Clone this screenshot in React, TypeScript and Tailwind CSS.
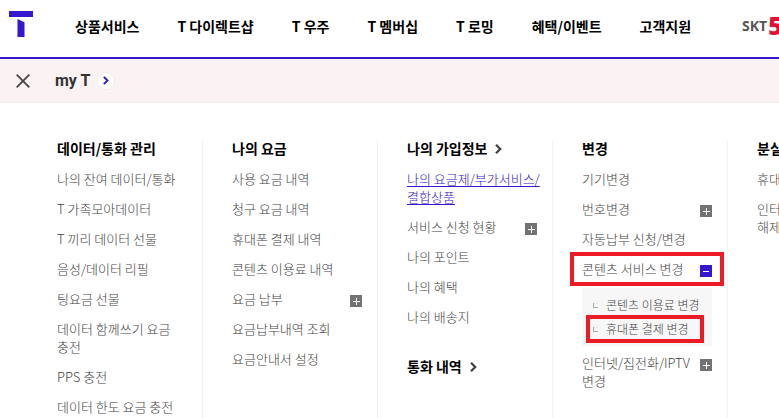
import { useState } from "react";
import clsx from "clsx";

interface MenuItem {
  label: string;
  active?: boolean;
  expandable?: boolean;
  marked?: boolean;
  children?: { label: string; marked?: boolean }[];
}

interface MenuGroup {
  title: string;
  arrow?: boolean;
  items: MenuItem[];
}

const mainNav = ["상품서비스", "T 다이렉트샵", "T 우주", "T 멤버십", "T 로밍", "혜택/이벤트", "고객지원"];

const columns: MenuGroup[][] = [
  [
    {
      title: "데이터/통화 관리",
      items: [
        { label: "나의 잔여 데이터/통화" },
        { label: "T 가족모아데이터" },
        { label: "T 끼리 데이터 선물" },
        { label: "음성/데이터 리필" },
        { label: "팅요금 선물" },
        { label: "데이터 함께쓰기 요금\n충전" },
        { label: "PPS 충전" },
        { label: "데이터 한도 요금 충전" },
      ],
    },
  ],
  [
    {
      title: "나의 요금",
      items: [
        { label: "사용 요금 내역" },
        { label: "청구 요금 내역" },
        { label: "휴대폰 결제 내역" },
        { label: "콘텐츠 이용료 내역" },
        { label: "요금 납부", expandable: true },
        { label: "요금납부내역 조회" },
        { label: "요금안내서 설정" },
      ],
    },
  ],
  [
    {
      title: "나의 가입정보",
      arrow: true,
      items: [
        { label: "나의 요금제/부가서비스/\n결합상품", active: true },
        { label: "서비스 신청 현황", expandable: true },
        { label: "나의 포인트" },
        { label: "나의 혜택" },
        { label: "나의 배송지" },
      ],
    },
    { title: "통화 내역", arrow: true, items: [] },
  ],
  [
    {
      title: "변경",
      items: [
        { label: "기기변경" },
        { label: "번호변경", expandable: true },
        { label: "자동납부 신청/변경" },
        {
          label: "콘텐츠 서비스 변경",
          expandable: true,
          marked: true,
          children: [{ label: "콘텐츠 이용료 변경" }, { label: "휴대폰 결제 변경", marked: true }],
        },
        { label: "인터넷/집전화/IPTV\n변경", expandable: true },
      ],
    },
  ],
  [
    {
      title: "분실",
      items: [{ label: "휴대" }, { label: "인터\n해제" }],
    },
  ],
];

function Chevron({ className }: { className?: string }) {
  return (
    <svg viewBox="0 0 7 10" className={className} fill="none" stroke="currentColor" strokeWidth="2.300" aria-hidden="true">
      <path d="M1 .8L5.200 5 1 9.200" />
    </svg>
  );
}

function ToggleButton({ label, open, onClick }: { label: string; open: boolean; onClick: () => void }) {
  return (
    <button
      type="button"
      aria-label={label}
      aria-expanded={open}
      onClick={onClick}
      className={clsx("mt-[5px] h-3 w-3 shrink-0 text-white", open ? "bg-[#3617ce]" : "bg-[#737373]")}
    >
      <svg viewBox="0 0 12 12" className="h-3 w-3" stroke="currentColor" aria-hidden="true">
        <path d={open ? "M3 6.5h6" : "M3 6.5h7M6.5 3v7"} />
      </svg>
    </button>
  );
}

function MenuRow({ item }: { item: MenuItem }) {
  const [open, setOpen] = useState(Boolean(item.children));
  const showChildren = open && item.children;

  return (
    <li className={showChildren ? "mb-2" : "mb-3"}>
      <div className="relative flex items-start justify-between">
        <a
          href="#"
          className={clsx(
            "whitespace-pre text-[13px] leading-[18px] font-light",
            item.active ? "text-[#3617ce] underline underline-offset-2" : "text-[#444]"
          )}
        >
          {item.label}
        </a>
        {item.expandable && <ToggleButton label={item.label} open={open} onClick={() => setOpen(!open)} />}
        {item.marked && (
          <span className="pointer-events-none absolute -inset-x-3 -top-2 -bottom-2 border-4 border-[#ed1c24]" />
        )}
      </div>
      {showChildren && (
        <ul className="mt-2.5 bg-[#f7f7f7] py-[5px] pl-2">
          {item.children?.map((child) => (
            <li key={child.label} className="relative flex h-6 items-center gap-2 pl-[3px]">
              <span className="h-[5px] w-[5px] border-b border-l border-[#aaa]" />
              <a href="#" className="text-xs font-light whitespace-nowrap text-[#444]">
                {child.label}
              </a>
              {child.marked && (
                <span className="pointer-events-none absolute -top-0.5 right-2 -bottom-0.5 -left-1 border-4 border-[#ed1c24]" />
              )}
            </li>
          ))}
        </ul>
      )}
    </li>
  );
}

export default function App() {
  return (
    <div className="h-screen overflow-hidden bg-white font-['Noto_Sans_CJK_KR',sans-serif]">
      <header className="flex h-[59px] items-start border-b-2 border-[#3617ce]">
        <a href="#" aria-label="T world" className="mt-[11px] ml-[9px] shrink-0 text-[#3617ce]">
          <svg viewBox="0 0 24 26" className="h-[26px] w-6" fill="currentColor" aria-hidden="true">
            <path d="M0 0h24v6H0zM8.500 8l7 3.200V26h-7z" />
          </svg>
        </a>
        <nav className="ml-[42px] flex h-[52px] shrink-0 items-center gap-[38px]">
          {mainNav.map((label) => (
            <a key={label} href="#" className="text-sm font-bold whitespace-nowrap text-black">
              {label}
            </a>
          ))}
        </nav>
        <a href="#" className="ml-[51px] flex h-[52px] shrink-0 items-center gap-px whitespace-nowrap">
          <span className="font-['Open_Sans',sans-serif] text-sm font-bold text-[#555]">SKT</span>
          <span className="font-['Open_Sans',sans-serif] text-2xl font-extrabold text-[#dc1436]">5</span>
        </a>
      </header>

      <div className="flex h-11 items-center border-b border-[#f0eeee] bg-[#fbf2f3] pl-4">
        <button type="button" aria-label="닫기" className="text-[#444]">
          <svg viewBox="0 0 14 14" className="h-3.5 w-3.5" stroke="currentColor" strokeWidth="1.800" aria-hidden="true">
            <path d="M.7.7l12.600 12.600M13.300.7L.7 13.300" />
          </svg>
        </button>
        <a href="#" className="ml-[25px] flex items-center gap-[7px]">
          <span className="font-[Roboto,sans-serif] text-base font-bold text-[#333]">my T</span>
          <span className="flex h-[18px] w-[18px] items-center justify-center rounded-full border border-[#eee] bg-white text-[#3617ce]">
            <Chevron className="h-[9px] w-1.5" />
          </span>
        </a>
      </div>

      <div className="flex pt-[37px] pl-7">
        {columns.map((groups) => (
          <section
            key={groups[0].title}
            className="min-h-screen w-[175px] shrink-0 border-r border-[#f2f2f2] pr-[15px] pl-[29px]"
          >
            {groups.map((group) => (
              <div key={group.title} className="mb-8">
                <h2 className="-mt-0.5 mb-3 text-sm leading-5 font-bold whitespace-nowrap text-black">
                  <a href="#" className="flex items-center gap-2">
                    {group.title}
                    {group.arrow && <Chevron className="mt-0.5 h-2.5 w-[7px] text-[#444]" />}
                  </a>
                </h2>
                <ul>
                  {group.items.map((item) => (
                    <MenuRow key={item.label} item={item} />
                  ))}
                </ul>
              </div>
            ))}
          </section>
        ))}
      </div>
    </div>
  );
}
